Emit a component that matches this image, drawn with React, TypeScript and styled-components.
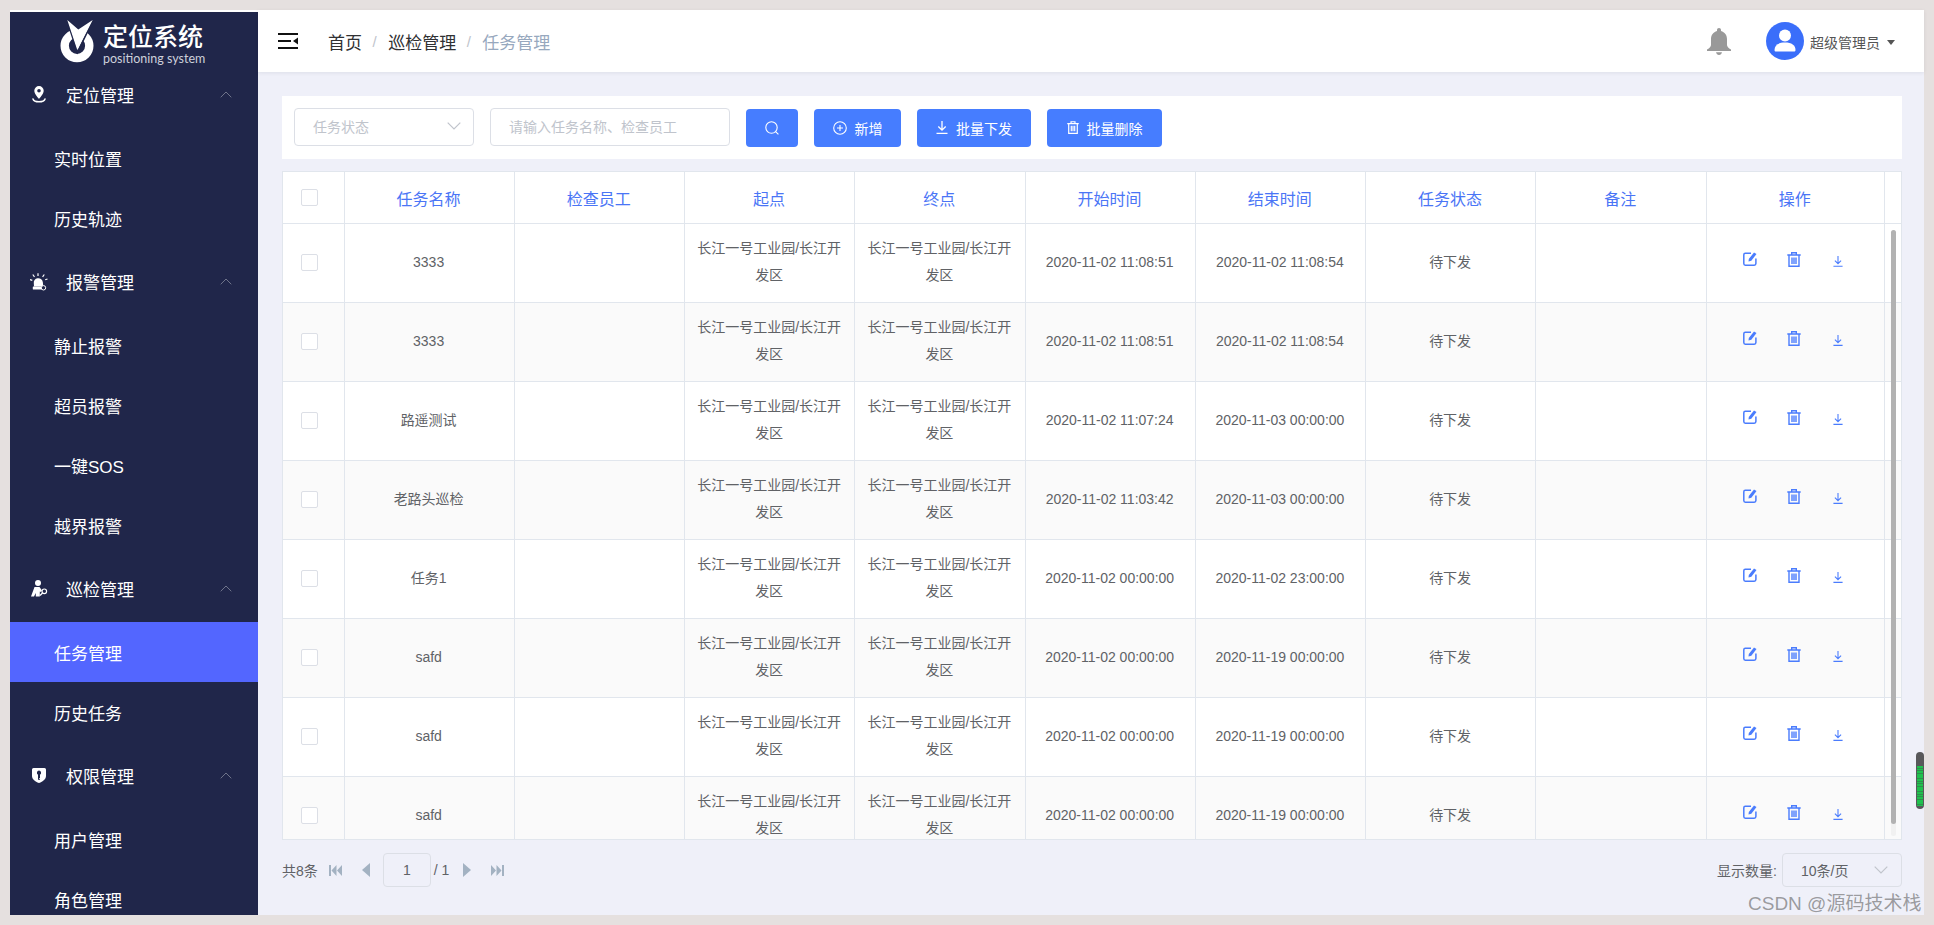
import styled, { createGlobalStyle } from "styled-components";

const GlobalStyle = createGlobalStyle`
  html, body {
    margin: 0;
    height: 100%;
    overflow: hidden;
    background: #e5e0df;
    font-family: "Liberation Sans", "Noto Sans CJK SC", sans-serif;
  }
  * { box-sizing: border-box; }
`;

const Frame = styled.div`
  position: relative;
  display: flex;
  width: 1934px;
  height: 925px;
  padding: 10px;
`;

const Sidebar = styled.aside`
  width: 248px;
  flex-shrink: 0;
  overflow: hidden;
  background: #20264a;
  border-top: 2px solid #fff;
`;

const LogoWrap = styled.div`
  display: flex;
  height: 49px;
  padding: 7px 0 0 50px;
`;

const LogoText = styled.div`
  margin-left: 9px;
  color: #fff;
`;

const LogoTitle = styled.div`
  font-size: 25px;
  line-height: 28px;
  margin-top: 4px;
  font-weight: 500;
  white-space: nowrap;
`;

const LogoSub = styled.div`
  margin-top: 1px;
  font-family: Lato, sans-serif;
  font-size: 12.5px;
  line-height: 13px;
  color: #cdd0da;
  white-space: nowrap;
`;

const GroupHead = styled.div`
  display: flex;
  align-items: center;
  height: 67px;
  padding: 0 26px 0 20px;
  color: #fff;
  font-size: 17px;
`;

const GroupIcon = styled.span`
  display: flex;
  justify-content: center;
  width: 18px;
  margin-right: 18px;
`;

const GroupLabel = styled.span`
  flex: 1;
`;

const SubItem = styled.div<{ $active?: boolean }>`
  display: flex;
  align-items: center;
  height: 60px;
  padding-left: 44px;
  color: #fff;
  font-size: 17px;
  background: ${(p) => (p.$active ? "#5366ff" : "transparent")};
`;

const Main = styled.div`
  flex: 1;
  min-width: 0;
  display: flex;
  flex-direction: column;
  background: #eff0f9;
`;

const TopBar = styled.header`
  display: flex;
  align-items: center;
  height: 62px;
  flex-shrink: 0;
  padding: 0 29px 0 20px;
  background: #fff;
  box-shadow: 0 1px 4px rgba(0, 21, 41, 0.08);
`;

const Crumbs = styled.nav`
  display: flex;
  align-items: center;
  flex: 1;
  margin-left: 30px;
  font-size: 17px;
  color: #303133;
`;

const CrumbSep = styled.span`
  margin: 0 11.5px 0 10.5px;
  font-size: 15px;
  color: #c0c4cc;
`;

const CrumbCurrent = styled.span`
  color: #97a8be;
`;

const UserBox = styled.div`
  display: flex;
  align-items: center;
  margin-left: 35px;
`;

const UserName = styled.span`
  margin: 2px 7px 0 6px;
  font-size: 14px;
  color: #555;
`;

const Caret = styled.span`
  width: 0;
  height: 0;
  margin-top: 2px;
  border-left: 4px solid transparent;
  border-right: 4px solid transparent;
  border-top: 5px solid #555;
`;

const Content = styled.div`
  flex: 1;
  padding: 24px 22px 0 24px;
`;

const FilterBar = styled.div`
  display: flex;
  align-items: center;
  gap: 16px;
  height: 63px;
  padding: 0 12px;
  background: #fff;
`;

const Field = styled.div<{ $width: number }>`
  display: flex;
  align-items: center;
  justify-content: space-between;
  width: ${(p) => p.$width}px;
  height: 38px;
  margin-top: -1px;
  padding: 0 12px 2px 18px;
  font-size: 14px;
  color: #c0c4cc;
  background: #fff;
  border: 1px solid #dcdfe6;
  border-radius: 4px;
`;

const Button = styled.button<{ $width: number }>`
  display: flex;
  align-items: center;
  justify-content: center;
  gap: 8px;
  width: ${(p) => p.$width}px;
  height: 38px;
  padding: 0;
  font: inherit;
  font-size: 14px;
  color: #fff;
  background: #467dff;
  border: 0;
  border-radius: 4px;
`;

const GRID = "61.5px repeat(8, 170.25px) 178.5px 1fr";

const Table = styled.div`
  position: relative;
  height: 669px;
  margin-top: 12px;
  overflow: hidden;
  background: #fff;
  border: 1px solid #e1e6ed;
`;

const HeadRow = styled.div`
  display: grid;
  grid-template-columns: ${GRID};
  height: 52px;
  border-bottom: 1px solid #e1e6ed;
`;

const HeadCell = styled.div`
  display: flex;
  align-items: center;
  justify-content: center;
  padding-right: 1px;
  font-size: 16px;
  color: #4a75f6;
  border-right: 1px solid #e1e6ed;

  &:first-child {
    padding-right: 7px;
  }

  &:last-child {
    border-right: 0;
  }
`;

const BodyRow = styled.div<{ $striped: boolean }>`
  display: grid;
  grid-template-columns: ${GRID};
  height: 79px;
  background: ${(p) => (p.$striped ? "#fafafa" : "#fff")};
  border-bottom: 1px solid #e1e6ed;
`;

const Cell = styled.div`
  display: flex;
  align-items: center;
  justify-content: center;
  padding: 0 13px 2px 12px;
  font-size: 14px;
  line-height: 27px;
  text-align: center;
  color: #606266;
  border-right: 1px solid #e1e6ed;

  &:first-child {
    padding: 0 19px 2px 12px;
  }

  &:last-child {
    border-right: 0;
  }
`;

const Check = styled.span`
  flex-shrink: 0;
  width: 17px;
  height: 17px;
  background: #fff;
  border: 1px solid #dcdfe6;
  border-radius: 2px;
`;

const Actions = styled.div`
  display: grid;
  grid-template-columns: 44px 44px 44px;
  justify-items: center;
  align-items: center;
  margin-top: -6px;
  margin-left: -1px;
`;

const ActionLow = styled.span`
  display: flex;
  margin-top: 5px;
`;

const ScrollTrack = styled.div`
  position: absolute;
  top: 58px;
  right: 5px;
  bottom: 3px;
  width: 5px;
  border-radius: 3px;
  background: #f1f1f1;
`;

const ScrollThumb = styled.div`
  height: 594px;
  border-radius: 3px;
  background: #b2b2b2;
`;

const Pager = styled.div`
  display: flex;
  align-items: center;
  height: 34px;
  margin-top: 13px;
  font-size: 14px;
  color: #606266;
`;

const PagerIcon = styled.span<{ $gap: number }>`
  display: flex;
  margin-left: ${(p) => p.$gap}px;
`;

const PageInput = styled.div`
  display: flex;
  align-items: center;
  justify-content: center;
  width: 48px;
  height: 34px;
  margin-left: 13px;
  color: #606266;
  border: 1px solid #dcdfe6;
  border-radius: 4px;
`;

const PageTotal = styled.span`
  margin-left: 3px;
  white-space: nowrap;
`;

const Spacer = styled.div`
  flex: 1;
`;

const SizeSelect = styled.div`
  display: flex;
  align-items: center;
  justify-content: space-between;
  width: 120px;
  height: 34px;
  margin-left: 5px;
  padding: 0 13px 0 18px;
  border: 1px solid #dcdfe6;
  border-radius: 4px;
`;

const Watermark = styled.div`
  position: absolute;
  left: 1748px;
  top: 891px;
  font-size: 19px;
  line-height: 25px;
  color: rgba(90, 90, 90, 0.58);
  white-space: nowrap;
`;

const GreenMeter = styled.div`
  position: absolute;
  left: 1916px;
  top: 752px;
  width: 8px;
  height: 57px;
  padding: 14px 1px 3px;
  border-radius: 4px;
  background: #58585a;
`;

const GreenBars = styled.div`
  height: 100%;
  background: repeating-linear-gradient(#1fc14e 0 1.8px, #2f8f4e 1.8px 2.6px);
`;

const LogoMark = () => (
  <svg width="34" height="44" viewBox="0 0 34 44" style={{ flexShrink: 0 }}>
    <circle cx="17" cy="26.800" r="12.300" fill="none" stroke="#fff" strokeWidth="8.400" />
    <path d="M7 1 L18 11 L33 1 L17.500 33 Z" fill="#fff" stroke="#20264a" strokeWidth="1.800" />
    <path d="M7.300 1 L18.300 10.500 L32.700 1 L17.300 31 Z" fill="#fff" />
  </svg>
);

const PinIcon = () => (
  <svg width="14" height="17" viewBox="0 0 14 17">
    <path fill="#fff" fillRule="evenodd" d="M7 0a4.700 4.700 0 0 0-4.700 4.700C2.300 8 7 12.800 7 12.800S11.700 8 11.700 4.700A4.700 4.700 0 0 0 7 0Zm0 3a1.800 1.800 0 1 1 0 3.600A1.800 1.800 0 0 1 7 3Z" />
    <path d="M1 13c.5 1.800 2.800 2.800 6 2.800s5.500-1 6-2.800" fill="none" stroke="#fff" strokeWidth="1.500" strokeLinecap="round" />
  </svg>
);

const AlarmIcon = () => (
  <svg width="18" height="18" viewBox="0 0 18 18" fill="#fff">
    <path d="M3.800 10.500a4.500 4.500 0 0 1 9-1.500l.5 4.500H4Z" />
    <rect x="2.800" y="13.500" width="9.500" height="3" rx=".6" />
    <circle cx="13.500" cy="14.800" r="2.200" fill="#20264a" stroke="#fff" strokeWidth="1" />
    <path d="M8 .3v2.800M2.800 1.500l1.700 2.300M14.300 1.500l-1.700 2.300M0 6.600l2.300.8M17.500 6l-2.300.8" stroke="#fff" strokeWidth="1.200" />
  </svg>
);

const PatrolIcon = () => (
  <svg width="17" height="18" viewBox="0 0 17 18" fill="#fff">
    <circle cx="7" cy="3" r="3" />
    <path d="M3.500 7 H8.500 L11 10.500 L9.500 12 L8.800 11.500 V16.500 H4.800 V13 L3 16.500 H0 Z" />
    <circle cx="13.300" cy="11.300" r="2.300" fill="none" stroke="#fff" strokeWidth="1.200" />
    <path d="M9 15.500 L11.500 13" stroke="#fff" strokeWidth="1.400" />
  </svg>
);

const ShieldIcon = () => (
  <svg width="14" height="15" viewBox="0 0 14 15" fill="#fff">
    <path fillRule="evenodd" d="M1.500 0H12.500Q14 0 14 1.500V8C14 11 11 13.500 7 15 3 13.500 0 11 0 8V1.500Q0 0 1.500 0ZM7 2.600a2.200 2.200 0 0 0-1 4.100V11.800h2v-.9H7.300V10H8V6.700A2.200 2.200 0 0 0 7 2.600Z" />
  </svg>
);

const ChevronUp = () => (
  <svg width="12" height="7" viewBox="0 0 12 7" fill="none" stroke="#6f748a" strokeWidth="1">
    <path d="M.7 6.300 6 1l5.300 5.300" />
  </svg>
);

const ChevronDown = ({ size = 14 }: { size?: number }) => (
  <svg width={size} height={size / 2 + 1} viewBox="0 0 14 8" fill="none" stroke="#c0c4cc" strokeWidth="1.200">
    <path d="M.7.7 7 7l6.300-6.300" />
  </svg>
);

const MenuFold = () => (
  <svg width="20" height="16" viewBox="0 0 20 16" fill="#111">
    <rect width="20" height="2" />
    <rect y="7" width="13" height="2" />
    <path d="M20 4.500v7L15 8Z" />
    <rect y="14" width="20" height="2" />
  </svg>
);

const BellIcon = () => (
  <svg width="24" height="27" viewBox="0 0 24 27" fill="#999">
    <path d="M12 0c1.200 0 2 .8 2 2v1c3.700 1 6 4.300 6 8v6c0 1.400 1.300 3.200 4 4.500V23H0v-1.500C2.700 20.200 4 18.400 4 17v-6c0-3.700 2.300-7 6-8V2c0-1.200.8-2 2-2Z" />
    <path d="M9 24.300h6c-.3 1.600-1.500 2.700-3 2.700s-2.700-1.100-3-2.700Z" />
  </svg>
);

const AvatarIcon = () => (
  <svg width="38" height="38" viewBox="0 0 38 38">
    <circle cx="19" cy="19" r="19" fill="#3a6efa" />
    <circle cx="19" cy="13.500" r="6" fill="#fff" />
    <path d="M8.500 28c0-5 4-7.500 10.500-7.500S29.500 23 29.500 28c0 1-.6 1.500-1.500 1.500H10c-.9 0-1.500-.5-1.500-1.500Z" fill="#fff" />
  </svg>
);

const SearchIcon = () => (
  <svg width="14" height="14" viewBox="0 0 14 14" fill="none" stroke="#fff" strokeWidth="1.100">
    <circle cx="6.500" cy="6.500" r="5.700" />
    <path d="m10.600 10.600 2.800 2.800" />
  </svg>
);

const PlusCircle = () => (
  <svg width="14" height="14" viewBox="0 0 14 14" fill="none" stroke="#fff" strokeWidth="1.100">
    <circle cx="7" cy="7" r="6.300" />
    <path d="M7 4v6M4 7h6" />
  </svg>
);

const DownloadIcon = ({ color = "#fff", size = 12 }: { color?: string; size?: number }) => (
  <svg width={size} height={size + 1} viewBox="0 0 12 13" fill="none" stroke={color} strokeWidth="1.300">
    <path d="M6 0v9M2.300 5.500 6 9.200l3.700-3.700M.5 12.300h11" />
  </svg>
);

const TrashIcon = ({ color = "#fff", size = 14 }: { color?: string; size?: number }) => (
  <svg width={size} height={size + 1} viewBox="0 0 14 15" fill="none" stroke={color} strokeWidth="1.400">
    <path d="M.3 3h13.400M4.700 3V.8h4.600V3M2 3v11.300h10V3M5 5.500v6.500M7 5.500v6.500M9 5.500v6.500" />
  </svg>
);

const EditIcon = () => (
  <svg width="14" height="14" viewBox="0 0 14 14" fill="none">
    <path d="M8 1.300H2.300C1.300 1.300.8 1.800.8 2.800v8.700c0 1 .5 1.700 1.500 1.700h8.900c1 0 1.700-.7 1.700-1.700V6.500" stroke="#4a7cfd" strokeWidth="1.500" />
    <path d="M11 .5 13.500 2 8.300 8.800l-2.800.8.300-2.500Z" fill="#4a7cfd" />
  </svg>
);

const PagerTriangle = ({ dir }: { dir: "left" | "right" }) => (
  <svg width="8" height="14" viewBox="0 0 8 14" fill="#a3b2c2">
    <path d={dir === "left" ? "M8 0v14L0 7Z" : "M0 0v14l8-7Z"} />
  </svg>
);

const PagerEdge = ({ dir }: { dir: "left" | "right" }) => (
  <svg width="13" height="11" viewBox="0 0 13 11" fill="#a3b2c2">
    {dir === "left" ? (
      <path d="M0 0h2v11H0ZM7.500 0v11L2.500 5.500ZM13 0v11L8 5.500Z" />
    ) : (
      <path d="M13 0h-2v11h2ZM5.500 0v11l5-5.500ZM0 0v11l5-5.500Z" />
    )}
  </svg>
);

const NAV = [
  { title: "定位管理", icon: <PinIcon />, items: ["实时位置", "历史轨迹"] },
  { title: "报警管理", icon: <AlarmIcon />, items: ["静止报警", "超员报警", "一键SOS", "越界报警"] },
  { title: "巡检管理", icon: <PatrolIcon />, items: ["任务管理", "历史任务"] },
  { title: "权限管理", icon: <ShieldIcon />, items: ["用户管理", "角色管理"] },
];

const COLUMNS = ["任务名称", "检查员工", "起点", "终点", "开始时间", "结束时间", "任务状态", "备注"];

const ROWS = [
  ["3333", "2020-11-02 11:08:51", "2020-11-02 11:08:54"],
  ["3333", "2020-11-02 11:08:51", "2020-11-02 11:08:54"],
  ["路遥测试", "2020-11-02 11:07:24", "2020-11-03 00:00:00"],
  ["老路头巡检", "2020-11-02 11:03:42", "2020-11-03 00:00:00"],
  ["任务1", "2020-11-02 00:00:00", "2020-11-02 23:00:00"],
  ["safd", "2020-11-02 00:00:00", "2020-11-19 00:00:00"],
  ["safd", "2020-11-02 00:00:00", "2020-11-19 00:00:00"],
  ["safd", "2020-11-02 00:00:00", "2020-11-19 00:00:00"],
];

const PLACE = "长江一号工业园/长江开发区";

const App = () => (
  <>
    <GlobalStyle />
    <Frame>
      <Sidebar>
        <LogoWrap>
          <LogoMark />
          <LogoText>
            <LogoTitle>定位系统</LogoTitle>
            <LogoSub>positioning system</LogoSub>
          </LogoText>
        </LogoWrap>
        {NAV.map((group) => (
          <div key={group.title}>
            <GroupHead>
              <GroupIcon>{group.icon}</GroupIcon>
              <GroupLabel>{group.title}</GroupLabel>
              <ChevronUp />
            </GroupHead>
            {group.items.map((item) => (
              <SubItem key={item} $active={item === "任务管理"}>
                {item}
              </SubItem>
            ))}
          </div>
        ))}
      </Sidebar>
      <Main>
        <TopBar>
          <MenuFold />
          <Crumbs>
            <span>首页</span>
            <CrumbSep>/</CrumbSep>
            <span>巡检管理</span>
            <CrumbSep>/</CrumbSep>
            <CrumbCurrent>任务管理</CrumbCurrent>
          </Crumbs>
          <BellIcon />
          <UserBox>
            <AvatarIcon />
            <UserName>超级管理员</UserName>
            <Caret />
          </UserBox>
        </TopBar>
        <Content>
          <FilterBar>
            <Field $width={180}>
              任务状态
              <ChevronDown />
            </Field>
            <Field $width={240}>请输入任务名称、检查员工</Field>
            <Button $width={52}>
              <SearchIcon />
            </Button>
            <Button $width={87}>
              <PlusCircle />
              新增
            </Button>
            <Button $width={114}>
              <DownloadIcon />
              批量下发
            </Button>
            <Button $width={115}>
              <TrashIcon size={12} />
              批量删除
            </Button>
          </FilterBar>
          <Table>
            <HeadRow>
              <HeadCell>
                <Check />
              </HeadCell>
              {COLUMNS.map((title) => (
                <HeadCell key={title}>{title}</HeadCell>
              ))}
              <HeadCell>操作</HeadCell>
              <HeadCell />
            </HeadRow>
            {ROWS.map(([name, start, end], i) => (
              <BodyRow key={i} $striped={i % 2 === 1}>
                <Cell>
                  <Check />
                </Cell>
                <Cell>{name}</Cell>
                <Cell />
                <Cell>{PLACE}</Cell>
                <Cell>{PLACE}</Cell>
                <Cell>{start}</Cell>
                <Cell>{end}</Cell>
                <Cell>待下发</Cell>
                <Cell />
                <Cell>
                  <Actions>
                    <EditIcon />
                    <TrashIcon color="#4a7cfd" />
                    <ActionLow>
                      <DownloadIcon color="#4a7cfd" size={10} />
                    </ActionLow>
                  </Actions>
                </Cell>
                <Cell />
              </BodyRow>
            ))}
            <ScrollTrack>
              <ScrollThumb />
            </ScrollTrack>
          </Table>
          <Pager>
            共8条
            <PagerIcon $gap={11}>
              <PagerEdge dir="left" />
            </PagerIcon>
            <PagerIcon $gap={20}>
              <PagerTriangle dir="left" />
            </PagerIcon>
            <PageInput>1</PageInput>
            <PageTotal>/ 1</PageTotal>
            <PagerIcon $gap={14}>
              <PagerTriangle dir="right" />
            </PagerIcon>
            <PagerIcon $gap={20}>
              <PagerEdge dir="right" />
            </PagerIcon>
            <Spacer />
            显示数量:
            <SizeSelect>
              10条/页
              <ChevronDown />
            </SizeSelect>
          </Pager>
        </Content>
      </Main>
      <GreenMeter>
        <GreenBars />
      </GreenMeter>
      <Watermark>CSDN @源码技术栈</Watermark>
    </Frame>
  </>
);

export default App;
